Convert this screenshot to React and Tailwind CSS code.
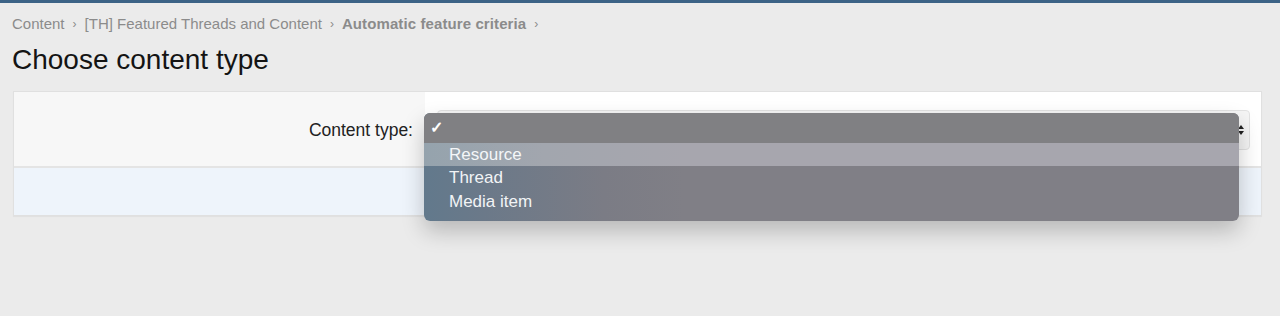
export default function App() {
  const options = ["Resource", "Thread", "Media item"];

  return (
    <div
      className="h-[316px] w-[1280px] overflow-hidden bg-[#ebebeb] border-t-[3px] border-[#3c6386]"
      style={{ fontFamily: '"Liberation Sans", Arial, sans-serif' }}
    >
      <div className="px-3 pt-[12px]">
        {/* breadcrumb */}
        <div className="flex items-center gap-[8px] text-[15px] text-[#8b8b8b] leading-[18px]">
          <span>Content</span>
          <span className="text-[12px]">›</span>
          <span>[TH] Featured Threads and Content</span>
          <span className="text-[12px]">›</span>
          <span className="font-bold tracking-[0.1px]">Automatic feature criteria</span>
          <span className="text-[12px]">›</span>
        </div>

        <h1 className="mt-[11px] text-[28px] leading-[32px] text-[#141414]">Choose content type</h1>

        {/* form panel */}
        <div className="mt-[15px] ml-px w-[1249px] border border-[#e0e0e0] bg-white shadow-[0_1px_1px_rgba(0,0,0,0.04)]">
          <div className="flex h-[76px] border-b-2 border-[#e4e4e4]">
            <div className="flex w-[411px] items-center justify-end bg-[#f7f7f7] pr-[12px] pt-[2px] text-[17.5px] text-[#222]">
              Content type:
            </div>
            <div className="relative flex-1 pl-[12px] pr-[11px] pt-[18px]">
              <div className="flex h-[40px] items-center justify-end rounded-[4px] border border-[#e2e2e2] bg-[#f5f5f5] pr-[4px]">
                <svg width="8" height="12" viewBox="0 0 8 12">
                  <path d="M4 1 L7 5 H1 Z M4 11 L7 7 H1 Z" fill="#222" />
                </svg>
              </div>

              {/* native-looking open menu */}
              <div className="absolute left-[-1px] top-[21px] z-10 w-[815px] overflow-hidden rounded-[6px] bg-[linear-gradient(90deg,#62798c_0px,#6b7989_60px,#7b7c85_180px,#807f86_260px)] shadow-[0_10px_22px_rgba(0,0,0,0.22)] text-[17px] text-[#f2f4f6]">
                <div className="flex h-[30px] items-center bg-[#808083] pl-[6px] text-[16px] font-bold text-white">✓</div>
                <div className="flex h-[23px] items-center bg-[linear-gradient(90deg,#95a3ad_0px,#a2a6ae_120px,#a7a6ae_260px)] pl-[25px] text-[#f4f6f8]">
                  {options[0]}
                </div>
                <div className="flex h-[24px] items-center pl-[25px]">{options[1]}</div>
                <div className="flex h-[24px] items-center pl-[25px] pb-[1px]">{options[2]}</div>
                <div className="h-[7px]" />
              </div>
            </div>
          </div>
          <div className="h-[47px] bg-[#eef4fb]" />
        </div>
      </div>
    </div>
  );
}
